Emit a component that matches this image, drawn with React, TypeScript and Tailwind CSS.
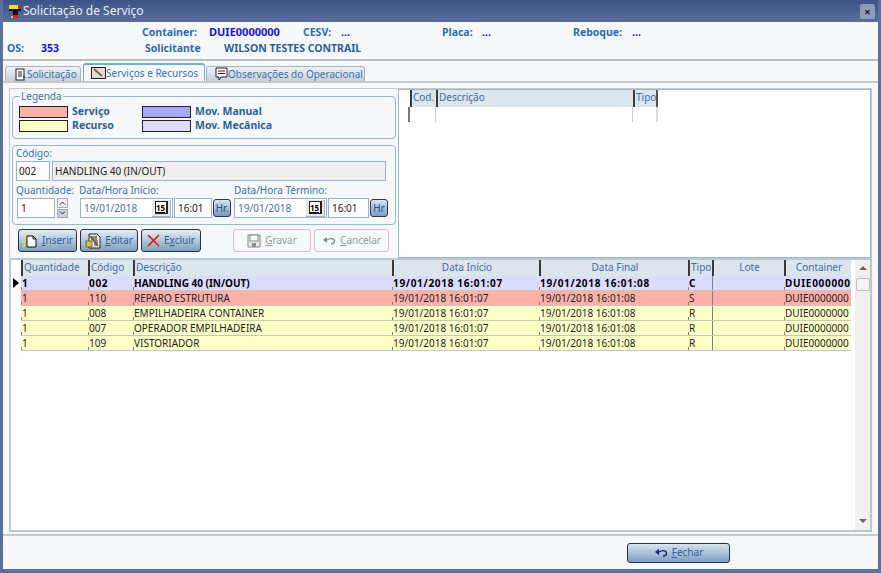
import type { ReactNode } from "react";

const font = { fontFamily: '"Noto Sans", "DejaVu Sans", sans-serif' };

const rows = [
  { qtd: "1", cod: "002", desc: "HANDLING 40 (IN/OUT)", tipo: "C", bg: "bg-[#dcdcff]", bold: true },
  { qtd: "1", cod: "110", desc: "REPARO ESTRUTURA", tipo: "S", bg: "bg-[#ffb0a8]", bold: false },
  { qtd: "1", cod: "008", desc: "EMPILHADEIRA CONTAINER", tipo: "R", bg: "bg-[#ffffc8]", bold: false },
  { qtd: "1", cod: "007", desc: "OPERADOR EMPILHADEIRA", tipo: "R", bg: "bg-[#ffffc8]", bold: false },
  { qtd: "1", cod: "109", desc: "VISTORIADOR", tipo: "R", bg: "bg-[#ffffc8]", bold: false },
];

function UndoIcon({ color }: { color: string }) {
  return (
    <svg width="14" height="10" viewBox="0 0 14 10" fill="none">
      <path d="M1 4 L5 1 L5 7 Z" fill={color} />
      <path d="M5 4 C8 2 12 2 12.5 5 C12.5 7 11 8 9 8" stroke={color} strokeWidth="1.4" />
    </svg>
  );
}

function CalendarButton() {
  return (
    <div className="flex h-[17px] w-[19px] items-center justify-center border-r border-b border-[#b0b0b0] bg-[#e6e6e6]">
      <div className="flex h-[13px] w-[13px] items-center justify-center border border-r-2 border-[#222] bg-white text-[8px] font-bold leading-none text-black underline">15</div>
    </div>
  );
}

function DateField({ date }: { date: string }) {
  return (
    <div className="flex h-[20px] w-[93px] items-center justify-between border border-[#9ab3cc] bg-white pl-[3px] pr-[1px] text-[10px] text-[#4a6fa5]">
      <span>{date}</span>
      <CalendarButton />
    </div>
  );
}

function TimeField({ w }: { w: string }) {
  return <div className={`flex h-[20px] items-center border border-[#9ab3cc] bg-white pl-[3px] text-[10px] text-[#222] ${w}`}>16:01</div>;
}

function HrButton({ label }: { label: string }) {
  return (
    <div className="flex h-[18px] w-[18px] items-center justify-center rounded-[3px] border border-[#35305e] bg-gradient-to-b from-[#d8e4ef] to-[#7c9dbd] text-[10px] text-[#1d4f91]">
      {label}
    </div>
  );
}

function ActionButton({ icon, label, wide, disabled }: { icon: ReactNode; label: ReactNode; wide: string; disabled?: boolean }) {
  return (
    <div
      className={`flex h-[23px] items-center justify-center gap-1 rounded-[3px] border text-[10px] ${wide} ${
        disabled
          ? "border-[#d8b8d8] bg-[#f5f9fc] text-[#9a9a9a]"
          : "border-[#26304e] bg-gradient-to-b from-[#e6eef5] to-[#7f9fbf] text-[#2a5f9e]"
      }`}
    >
      {icon}
      <span>{label}</span>
    </div>
  );
}

function Swatch({ color, label }: { color: string; label: string }) {
  return (
    <div className="flex h-[12px] items-center gap-[4px]">
      <div className={`h-[12px] w-[49px] border border-[#222] ${color}`} />
      <span className="text-[10.5px] font-bold text-[#2a5f9e]">{label}</span>
    </div>
  );
}

function HeaderLabel({ w, children, center }: { w: string; children: ReactNode; center?: boolean }) {
  return (
    <div className={`h-full shrink-0 overflow-hidden whitespace-nowrap border-l-2 border-[#3a3a3a] pl-[1px] leading-[15px] ${w} ${center ? "text-center" : ""}`}>
      {children}
    </div>
  );
}

function Cell({ w, solid, wide, children }: { w: string; solid?: boolean; wide?: boolean; children?: ReactNode }) {
  return (
    <div className={`relative h-full shrink-0 overflow-hidden whitespace-nowrap pl-[1px] leading-[14px] ${w} ${wide ? "tracking-[0.7px]" : ""}`}>
      <div className={`absolute bottom-0 left-0 w-px bg-[#808080] ${solid ? "h-full" : "h-[3px]"}`} />
      {children}
    </div>
  );
}

export default function App() {
  return (
    <div style={font} className="flex h-[573px] w-[881px] flex-col overflow-hidden border-x-[3px] border-b-[4px] border-[#5d6f9b] bg-[#f5f9fc]">
      <div className="flex h-[22px] shrink-0 items-center justify-between bg-gradient-to-b from-[#3f5285] to-[#5b6d9f] pl-[5px] pr-[3px]">
        <div className="flex items-center gap-[1px]">
          <svg width="14" height="15" viewBox="0 0 14 15">
            <rect x="1" y="1" width="9" height="5" fill="#f0e020" />
            <rect x="10" y="2" width="3" height="4" fill="#d02020" />
            <rect x="1" y="5" width="12" height="2" fill="#111" />
            <rect x="5" y="7" width="5" height="4" fill="#111" />
            <rect x="5" y="11" width="5" height="3" fill="#d02020" />
            <rect x="3" y="12" width="2" height="2" fill="#f0c020" />
          </svg>
          <span className="text-[12px] text-[#e8eef8]">Solicitação de Serviço</span>
        </div>
        <div className="flex h-[15px] w-[15px] items-center justify-center rounded-[2px] bg-[#8d9ab8] text-[11px] font-bold leading-none text-[#222]">×</div>
      </div>

      <div className="flex h-[39px] shrink-0 flex-col border-b-2 border-[#bcbcbc] pt-[3px] text-[10.5px] font-bold">
        <div className="flex h-[15px] items-center">
          <span className="ml-[139px] w-[67px] text-[#2a6bb0]">Container:</span>
          <span className="w-[94px] text-[11px] text-[#1414e0]">DUIE0000000</span>
          <span className="w-[38px] text-[#2a6bb0]">CESV:</span>
          <span className="w-[101px] text-[#1414e0]">...</span>
          <span className="w-[40px] text-[#2a6bb0]">Placa:</span>
          <span className="w-[91px] text-[#1414e0]">...</span>
          <span className="w-[59px] text-[#2a6bb0]">Reboque:</span>
          <span className="text-[#1414e0]">...</span>
        </div>
        <div className="mt-[1px] flex h-[15px] items-center">
          <span className="ml-[4px] w-[34px] text-[#2a6bb0]">OS:</span>
          <span className="w-[104px] text-[#1414e0]">353</span>
          <span className="w-[79px] text-[#2a6bb0]">Solicitante</span>
          <span className="text-[#2a5f9e]">WILSON TESTES CONTRAIL</span>
        </div>
      </div>

      <div className="flex h-[20px] shrink-0 items-end pl-[2px] text-[10px] text-[#3f6fa8]">
        <div className="flex h-[15px] w-[76px] items-center whitespace-nowrap rounded-t-[3px] border border-b-0 border-[#aab4c0] bg-gradient-to-b from-[#eef2f6] to-[#c6d0da] pl-[9px]">
          <svg width="12" height="13" viewBox="0 0 12 13" fill="none">
            <rect x="1" y="1" width="8" height="11" fill="#fff" stroke="#222" />
            <path d="M3 4h4M3 6h4M3 8h4" stroke="#222" />
            <path d="M8 7l3 3-3 0z" fill="#1d4f91" />
          </svg>
          <span>Solicitação</span>
        </div>
        <div className="ml-[2px] flex h-[18px] w-[122px] items-center whitespace-nowrap rounded-t-[3px] border-x border-t-2 border-[#6fb0d0] bg-[#f5f9fc] pl-[7px]">
          <svg width="15" height="12" viewBox="0 0 15 12">
            <rect x="0.5" y="0.5" width="14" height="11" fill="#ddd" stroke="#222" />
            <path d="M3 2 L11 9" stroke="#8a6a20" strokeWidth="2" />
          </svg>
          <span>Serviços e Recursos</span>
        </div>
        <div className="ml-[1px] flex h-[15px] w-[159px] items-center whitespace-nowrap rounded-t-[3px] border border-b-0 border-[#aab4c0] bg-gradient-to-b from-[#eef2f6] to-[#c6d0da] pl-[8px]">
          <svg width="13" height="14" viewBox="0 0 13 14" fill="none">
            <path d="M1 1h11v9H6l-2 3v-3H1z" fill="#fff" stroke="#222" />
            <path d="M3 4h7M3 6.500h7" stroke="#222" />
          </svg>
          <span>Observações do Operacional</span>
        </div>
      </div>

      <div className="flex min-h-0 flex-1 flex-col border-y-2 border-[#c8c8c8] px-[6px] pt-[5px] pb-[2px]">
        <div className="flex h-[170px] shrink-0 flex-col border border-b-0 border-[#c8c8c8]">
          <div className="flex min-h-0 flex-1">
            <div className="flex w-[388px] shrink-0 flex-col px-[2px] pt-[2px]">
              <fieldset className="h-[48px] rounded-[4px] border border-[#9ab7d2] pl-[6px] pt-[5px]">
                <legend className="ml-[1px] px-[1px] text-[10px] leading-[10px] text-[#3f6fa8]">Legenda</legend>
                <div className="flex">
                  <div className="flex w-[123px] flex-col gap-[2px]">
                    <Swatch color="bg-[#ffb0a8]" label="Serviço" />
                    <Swatch color="bg-[#ffffc8]" label="Recurso" />
                  </div>
                  <div className="flex flex-col gap-[2px]">
                    <Swatch color="bg-[#a8a8ff]" label="Mov. Manual" />
                    <Swatch color="bg-[#dcdcff]" label="Mov. Mecânica" />
                  </div>
                </div>
              </fieldset>

              <div className="mt-[6px] h-[80px] rounded-[4px] border border-[#9ab7d2] px-[3px] pt-[1px]">
                <div className="text-[10px] leading-[13px] text-[#3f6fa8]">Código:</div>
                <div className="mt-[1px] flex h-[20px] gap-[2px]">
                  <div className="flex w-[34px] items-center border border-[#9ab3cc] bg-white pl-[2px] text-[10px] text-[#222]">002</div>
                  <div className="flex w-[334px] items-center border border-[#9ab3cc] bg-[#efefef] pl-[2px] text-[10px] text-[#222]">HANDLING 40 (IN/OUT)</div>
                </div>
                <div className="mt-[3px] flex text-[10px] leading-[13px] text-[#3f6fa8]">
                  <span className="w-[63px]">Quantidade:</span>
                  <span className="w-[155px]">Data/Hora Início:</span>
                  <span>Data/Hora Término:</span>
                </div>
                <div className="mt-[1px] flex items-center">
                  <div className="ml-[1px] flex h-[20px] w-[38px] items-center border border-[#9ab3cc] bg-white pl-[3px] text-[10px] text-[#222]">1</div>
                  <div className="ml-[2px] flex h-[20px] w-[11px] flex-col gap-[1px]">
                    <div className="flex flex-1 items-center justify-center border border-[#aaa] bg-[#e8eef4]">
                      <svg width="7" height="4" viewBox="0 0 7 4" fill="none"><path d="M1 3.500L3.500 1L6 3.500" stroke="#234" /></svg>
                    </div>
                    <div className="flex flex-1 items-center justify-center border border-[#aaa] bg-[#c8d0d8]">
                      <svg width="7" height="4" viewBox="0 0 7 4" fill="none"><path d="M1 0.500L3.500 3L6 0.500" stroke="#234" /></svg>
                    </div>
                  </div>
                  <div className="ml-[12px] flex items-center gap-[1px]">
                    <DateField date="19/01/2018" />
                    <TimeField w="w-[38px]" />
                    <HrButton label="Hr." />
                  </div>
                  <div className="ml-[3px] flex items-center gap-[1px]">
                    <DateField date="19/01/2018" />
                    <TimeField w="w-[41px]" />
                    <HrButton label="Hr" />
                  </div>
                </div>
              </div>

              <div className="mt-[4px] flex gap-[3px] pl-[6px]">
                <ActionButton
                  wide="w-[59px]"
                  label={<><u>I</u>nserir</>}
                  icon={
                    <svg width="16" height="16" viewBox="0 0 16 16">
                      <path d="M1 3l4 3M0 9l4-1M1 14l3-3M5 0l2 4" stroke="#f4e820" strokeWidth="1.200" />
                      <path d="M5 3h6l3 3v8H5z" fill="#fff" stroke="#111" />
                      <path d="M11 3v3h3" fill="none" stroke="#111" />
                    </svg>
                  }
                />
                <ActionButton
                  wide="w-[58px]"
                  label={<><u>E</u>ditar</>}
                  icon={
                    <svg width="16" height="16" viewBox="0 0 16 16">
                      <path d="M4 1h8l3 3v11H4z" fill="#f4f4e4" stroke="#222" />
                      <path d="M6 4h6M6 6h6M9 8h4M9 10h4M9 12h4" stroke="#222" />
                      <rect x="1" y="8" width="6" height="6" fill="#e0c040" stroke="#665" />
                      <path d="M5 3l8 10" stroke="#6a5a20" strokeWidth="1.500" />
                    </svg>
                  }
                />
                <ActionButton
                  wide="w-[60px]"
                  label={<>E<u>x</u>cluir</>}
                  icon={
                    <svg width="13" height="13" viewBox="0 0 13 13">
                      <path d="M1 1L12 12M12 1L1 12" stroke="#e01818" strokeWidth="1.700" />
                    </svg>
                  }
                />
                <div className="ml-[29px] flex gap-[3px]">
                  <ActionButton
                    disabled
                    wide="w-[78px]"
                    label={<><u>G</u>ravar</>}
                    icon={
                      <svg width="14" height="14" viewBox="0 0 14 14" fill="none">
                        <path d="M1 1h12v12H1z" fill="#e8e8e8" stroke="#8a8a8a" />
                        <rect x="3" y="1" width="8" height="6" fill="#fff" stroke="#8a8a8a" />
                        <rect x="5" y="9" width="4" height="4" fill="#8a8a8a" />
                      </svg>
                    }
                  />
                  <ActionButton disabled wide="w-[75px]" label={<><u>C</u>ancelar</>} icon={<UndoIcon color="#8a8a8a" />} />
                </div>
              </div>
            </div>

            <div className="flex-1 border border-[#9ab7d2] bg-white">
              <div className="flex h-[17px] text-[10px] text-[#3f6fa8]">
                <div className="w-[11px]" />
                <div className="flex bg-[#dce4ec]">
                  <HeaderLabel w="w-[26px]">Cod.</HeaderLabel>
                  <HeaderLabel w="w-[197px]">Descrição</HeaderLabel>
                  <div className="h-full w-[25px] border-x-2 border-l-[#3a3a3a] border-r-[#555] pl-[1px] leading-[15px]">Tipo</div>
                </div>
              </div>
              <div className="flex h-[15px]">
                <div className="w-[11px] border-r-2 border-[#777]" />
                <div className="w-[26px] border-r border-[#ccc]" />
                <div className="w-[197px] border-r border-[#ccc]" />
                <div className="w-[25px] border-r-2 border-[#ddd]" />
              </div>
            </div>
          </div>
        </div>

        <div className="flex min-h-0 flex-1 flex-col border-2 border-[#b8c8d8] bg-white">
          <div className="flex min-h-0 flex-1">
            <div className="min-w-0 flex-1 text-[10px]">
              <div className="flex h-[16px] pl-[10px] text-[#3f6fa8]">
                <div className="flex bg-[#dce4ec]">
                  <HeaderLabel w="w-[67px]">Quantidade</HeaderLabel>
                  <HeaderLabel w="w-[45px]">Código</HeaderLabel>
                  <HeaderLabel w="w-[259px]">Descrição</HeaderLabel>
                  <HeaderLabel w="w-[147px]" center>Data Início</HeaderLabel>
                  <HeaderLabel w="w-[149px]" center>Data Final</HeaderLabel>
                  <HeaderLabel w="w-[24px]">Tipo</HeaderLabel>
                  <HeaderLabel w="w-[72px]" center>Lote</HeaderLabel>
                  <HeaderLabel w="w-[67px]" center>Container</HeaderLabel>
                </div>
              </div>
              {rows.map((r, i) => (
                <div key={r.cod} className="relative flex h-[15px] pl-[10px]">
                  {i === 0 && <div className="absolute left-[2px] top-[2px] h-0 w-0 border-y-[5px] border-l-[6px] border-y-transparent border-l-black" />}
                  <div className={`flex border-b border-[#c8c8b8] text-[#222] ${r.bg} ${r.bold ? "font-bold text-black" : ""}`}>
                    <Cell w="w-[67px]">{r.qtd}</Cell>
                    <Cell w="w-[45px]" wide={r.bold}>{r.cod}</Cell>
                    <Cell w="w-[259px]">{r.desc}</Cell>
                    <Cell w="w-[147px]" wide={r.bold}>19/01/2018 16:01:07</Cell>
                    <Cell w="w-[149px]" wide={r.bold}>19/01/2018 16:01:08</Cell>
                    <Cell w="w-[24px]">{r.tipo}</Cell>
                    <Cell w="w-[72px]" solid />
                    <Cell w="w-[67px]" wide={r.bold}>DUIE0000000</Cell>
                  </div>
                </div>
              ))}
            </div>
            <div className="flex w-[15px] shrink-0 flex-col items-center justify-between bg-[#f0f0f0] pt-[6px] pb-[7px]">
              <div className="flex w-full flex-col items-center gap-[8px]">
                <div className="h-0 w-0 border-x-[4px] border-b-[4px] border-x-transparent border-b-[#666]" />
                <div className="h-[13px] w-[14px] rounded-[2px] border border-[#bbb] bg-[#f4f4f4]" />
              </div>
              <div className="h-0 w-0 border-x-[4px] border-t-[4px] border-x-transparent border-t-[#666]" />
            </div>
          </div>
        </div>
      </div>

      <div className="flex h-[33px] shrink-0 items-center justify-end pr-[148px]">
        <div className="flex h-[20px] w-[103px] items-center justify-center gap-1 rounded-[3px] border border-[#26304e] bg-gradient-to-b from-[#d8e4ef] to-[#7f9fbf] text-[10px] text-[#2a5f9e]">
          <UndoIcon color="#14206e" />
          <span><u>F</u>echar</span>
        </div>
      </div>
    </div>
  );
}
